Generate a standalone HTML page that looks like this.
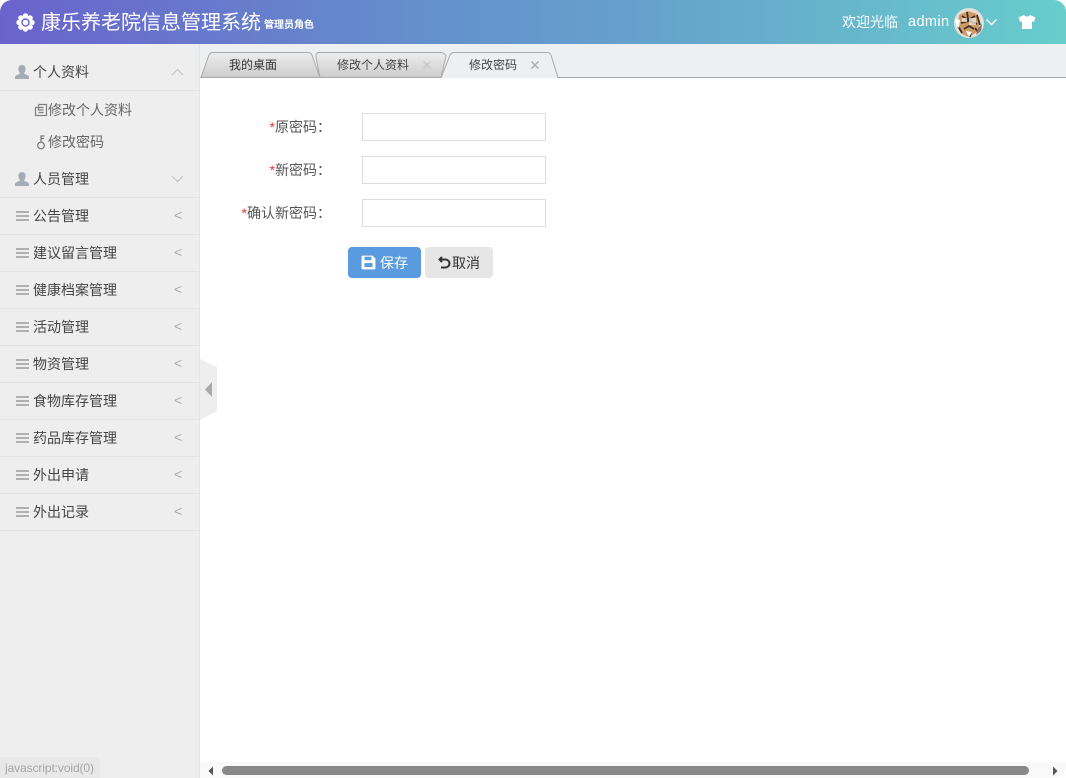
<!DOCTYPE html>
<html lang="zh-CN"><head><meta charset="utf-8"><title>康乐养老院信息管理系统</title>
<style>
*{box-sizing:border-box}
html,body{margin:0;padding:0;width:1066px;height:778px;overflow:hidden;background:#fff}
body{font-family:"Liberation Sans","WenQuanYi Zen Hei","Noto Sans CJK SC",sans-serif;color:#444;font-size:14px;position:relative}
.a{position:absolute;white-space:nowrap}
#hd{left:0;top:0;width:1066px;height:44px;background:linear-gradient(90deg,#6a63cc 0%,#6492cc 42%,#66a6cc 65%,#67cdcc 100%);border-radius:12px 12px 0 0}
#side{left:0;top:44px;width:200px;height:734px;background:#eee;border-right:1px solid #e4e4e4}
.row{position:absolute;left:0;width:199px;height:37px;border-bottom:1px solid #e3e3e3}
.row span{position:absolute;left:33px;top:0;line-height:37px;font-size:14px;color:#444}
.row svg{position:absolute;left:15px;top:11px}
.row i{position:absolute;left:174px;top:7px;font:normal 14px/20px "Liberation Sans",sans-serif;color:#aaa}
.sub{font-size:14px;color:#666;line-height:20px}
#tabs{left:200px;top:44px;width:866px;height:34px;background:#eeeff0;border-bottom:1px solid #aaa}
.lab{right:735px;text-align:right;font-size:14px;color:#555;line-height:20px}
.lab b{font-weight:normal;color:#e33}
.inp{left:362px;width:184px;height:28px;border:1px solid #ddd;background:#fff}
.m{position:absolute;left:16px;top:13px;width:13px;height:10px;border-top:2px solid #b0b0b0;border-bottom:2px solid #b0b0b0}
.m:after{content:"";position:absolute;left:0;right:0;top:2px;height:2px;background:#b0b0b0}
.tt{font-size:12px;line-height:20px;top:55px}
</style></head><body>
<div class="a" id="hd"></div>
<svg class="a" style="left:16px;top:13px" width="19" height="19" viewBox="0 0 19 19"><g fill="#fff"><circle cx="9.500" cy="3" r="2.700"/><circle cx="9.500" cy="16" r="2.700"/><circle cx="3" cy="9.500" r="2.700"/><circle cx="16" cy="9.500" r="2.700"/><circle cx="4.900" cy="4.900" r="2.700"/><circle cx="14.100" cy="4.900" r="2.700"/><circle cx="4.900" cy="14.100" r="2.700"/><circle cx="14.100" cy="14.100" r="2.700"/><circle cx="9.500" cy="9.500" r="5.500"/></g><circle cx="9.500" cy="9.500" r="3.500" fill="none" stroke="#6a63cc" stroke-width="1.400"/></svg>
<div class="a" style="left:41px;top:9px;font-size:20px;line-height:28px;color:#fff">康乐养老院信息管理系统</div>
<div class="a" style="left:264px;top:18px;font-size:10px;line-height:16px;color:#fff;font-weight:bold">管理员角色</div>
<div class="a" style="left:842px;top:12px;font-size:14px;line-height:20px;color:#fff">欢迎光临</div>
<div class="a" style="left:908px;top:12px;font-size:14.500px;line-height:20px;color:#fff;letter-spacing:.4px">admin</div>
<svg class="a" style="left:954px;top:8px" width="30" height="30" viewBox="0 0 30 30"><circle cx="15" cy="15" r="15" fill="#e4dfd8"/><path d="M5 7L14 3L23 6L26 14L23 24L15 29L8 26L4 17Z" fill="#cf9a66"/><path d="M8 8l6 4 7-4M7 15l8-2 8 3M10 21l5-3 5 3M4 18l4 7M23 7l3 10M13 4l1 7M17 24l-1 5M21 20l3 4" stroke="#40312a" stroke-width="1.800" fill="none"/><path d="M1 11l5 1-1 8-3-3zM12 23l6 1-3 5z" fill="#fff"/><path d="M15 10h7v7h-7zM8 10h5v4H8z" fill="#efe9e0" opacity=".75"/><path d="M24 20l4-4-1 7-5 4z" fill="#8d7566"/></svg>
<svg class="a" style="left:985px;top:18px" width="13" height="9" viewBox="0 0 13 9"><path d="M1.500 1.500L6.500 6.500L11.500 1.500" stroke="#fff" stroke-width="1.400" fill="none"/></svg>
<svg class="a" style="left:1018px;top:15px" width="18" height="14" viewBox="0 0 18 14"><path d="M6 0L0.500 2.500L2 7L4 6.200V14H14V6.200L16 7L17.500 2.500L12 0C11 2 7 2 6 0Z" fill="#fff"/></svg>

<div class="a" id="side"></div>
<div class="row" style="top:54px;height:37px"><svg width="14" height="14" viewBox="0 0 14 14"><path d="M7 0C9.600 0 10.800 2 10.600 4.500C10.400 6.400 9.500 7.500 9 8.200C9 9.300 14 9.700 14 12.200V14H0V12.200C0 9.700 5 9.300 5 8.200C4.500 7.500 3.600 6.400 3.400 4.500C3.200 2 4.400 0 7 0Z" fill="#a6acb6"/></svg><span>个人资料</span><svg style="left:171px;top:14px" width="13" height="8" viewBox="0 0 13 8"><path d="M1 7L6.500 1.500L12 7" stroke="#c4c4c4" stroke-width="1.200" fill="none"/></svg></div>
<svg class="a" style="left:34px;top:103px" width="14" height="14" viewBox="0 0 14 14"><path d="M4.500 1.500H12.500V12.500H1.500V4.500H9.500M4.500 1.500V7H9.500M4.500 9.500H9.500" stroke="#808080" stroke-width="1.200" fill="none"/></svg>
<div class="a sub" style="left:48px;top:100px">修改个人资料</div>
<svg class="a" style="left:36px;top:135px" width="10" height="15" viewBox="0 0 10 15"><circle cx="5" cy="10.500" r="3.300" stroke="#777" stroke-width="1.200" fill="none"/><path d="M5 7V1H8.500M5 3.500H8" stroke="#777" stroke-width="1.200" fill="none"/></svg>
<div class="a sub" style="left:48px;top:132px">修改密码</div>
<div class="row" style="top:161px"><svg width="14" height="14" viewBox="0 0 14 14"><path d="M7 0C9.600 0 10.800 2 10.600 4.500C10.400 6.400 9.500 7.500 9 8.200C9 9.300 14 9.700 14 12.200V14H0V12.200C0 9.700 5 9.300 5 8.200C4.500 7.500 3.600 6.400 3.400 4.500C3.200 2 4.400 0 7 0Z" fill="#a6acb6"/></svg><span>人员管理</span><svg style="left:171px;top:14px" width="13" height="8" viewBox="0 0 13 8"><path d="M1 1L6.500 6.500L12 1" stroke="#c4c4c4" stroke-width="1.200" fill="none"/></svg></div>
<div class="row" style="top:198px"><div class="m"></div><span>公告管理</span><i>&lt;</i></div>
<div class="row" style="top:235px"><div class="m"></div><span>建议留言管理</span><i>&lt;</i></div>
<div class="row" style="top:272px"><div class="m"></div><span>健康档案管理</span><i>&lt;</i></div>
<div class="row" style="top:309px"><div class="m"></div><span>活动管理</span><i>&lt;</i></div>
<div class="row" style="top:346px"><div class="m"></div><span>物资管理</span><i>&lt;</i></div>
<div class="row" style="top:383px"><div class="m"></div><span>食物库存管理</span><i>&lt;</i></div>
<div class="row" style="top:420px"><div class="m"></div><span>药品库存管理</span><i>&lt;</i></div>
<div class="row" style="top:457px"><div class="m"></div><span>外出申请</span><i>&lt;</i></div>
<div class="row" style="top:494px"><div class="m"></div><span>外出记录</span><i>&lt;</i></div>

<div class="a" id="tabs"></div>
<svg class="a" style="left:200px;top:50px" width="370" height="29" viewBox="0 0 370 29">
<defs><linearGradient id="g" x1="0" y1="0" x2="0" y2="1"><stop offset="0" stop-color="#eee"/><stop offset="1" stop-color="#ccc"/></linearGradient></defs>
<path d="M1 27.500L9 5Q10.500 2.500 13 2.500H108Q111 2.500 112 5L120 27.500Z" fill="url(#g)" stroke="#aaa"/>
<path d="M120 27.500L116 7Q115.500 2.500 119 2.500H240Q245 2.500 246 6L241 27.500Z" fill="url(#g)" stroke="#aaa"/>
<path d="M241 28L250 5Q251.500 2.500 254 2.500H347Q350 2.500 351 5L358 27.500H369" fill="#eeeff0" stroke="#aaa"/>
<path d="M242 27.500H357" stroke="#eeeff0" stroke-width="1.500"/>
</svg>
<div class="a tt" style="left:229px;color:#333">我的桌面</div>
<div class="a tt" style="left:337px;color:#444">修改个人资料</div>
<div class="a tt" style="left:469px;color:#444">修改密码</div>
<svg class="a" style="left:423px;top:61px" width="8" height="8" viewBox="0 0 8 8"><path d="M.5.500L7.500 7.500M7.500.5L.5 7.500" stroke="#c6c6c6" stroke-width="1.300"/></svg>
<svg class="a" style="left:531px;top:61px" width="8" height="8" viewBox="0 0 8 8"><path d="M.5.500L7.500 7.500M7.500.5L.5 7.500" stroke="#aaa" stroke-width="1.300"/></svg>

<div class="a lab" style="top:117px"><b>*</b>原密码：</div>
<div class="a lab" style="top:160px"><b>*</b>新密码：</div>
<div class="a lab" style="top:203px"><b>*</b>确认新密码：</div>
<div class="a inp" style="top:113px"></div>
<div class="a inp" style="top:156px"></div>
<div class="a inp" style="top:199px"></div>
<div class="a" style="left:348px;top:247px;width:73px;height:31px;background:#5a9ade;border-radius:4px"></div>
<svg class="a" style="left:361px;top:255px" width="15" height="15" viewBox="0 0 13 13"><path d="M1.500 0.500H10L12.500 3V11.500Q12.500 12.500 11.500 12.500H1.500Q.5 12.500 .5 11.500V1.500Q.5.5 1.500.5Z" fill="#fff"/><rect x="3" y="1.500" width="6" height="3" fill="#5a9ade"/><rect x="3" y="7" width="7" height="3.500" fill="#5a9ade"/></svg>
<div class="a" style="left:380px;top:253px;font-size:14px;line-height:20px;color:#fff">保存</div>
<div class="a" style="left:425px;top:247px;width:68px;height:31px;background:#e6e6e6;border-radius:4px"></div>
<svg class="a" style="left:438px;top:256px" width="13" height="13" viewBox="0 0 13 13"><path d="M4 1L1.500 3.500L4 6M1.500 3.500H7.500A4 4 0 0 1 7.500 11.500H3" stroke="#333" stroke-width="2" fill="none"/></svg>
<div class="a" style="left:452px;top:253px;font-size:14px;line-height:20px;color:#333">取消</div>

<svg class="a" style="left:200px;top:359px" width="18" height="62" viewBox="0 0 18 62"><path d="M0 0L17 8V52L0 61Z" fill="#eee"/><path d="M12 23V38L5 30.500Z" fill="#aaa"/></svg>

<div class="a" style="left:200px;top:762px;width:866px;height:16px;background:#f9f9f9;border-radius:0 0 12px 0"></div>
<div class="a" style="left:222px;top:766px;width:807px;height:9px;background:#888;border-radius:5px"></div>
<svg class="a" style="left:207px;top:766px" width="8" height="10" viewBox="0 0 8 10"><path d="M6 0.500V9.500L1.500 5Z" fill="#555"/></svg>
<svg class="a" style="left:1051px;top:766px" width="8" height="10" viewBox="0 0 8 10"><path d="M2 0.500V9.500L6.500 5Z" fill="#555"/></svg>
<div class="a" style="left:0;top:757px;width:100px;height:21px;background:#e8e8e8;border-radius:0 4px 0 0;font-size:12px;line-height:22px;color:#a6a6a6;padding-left:5px;letter-spacing:-.1px">javascript:void(0)</div>
</body></html>
